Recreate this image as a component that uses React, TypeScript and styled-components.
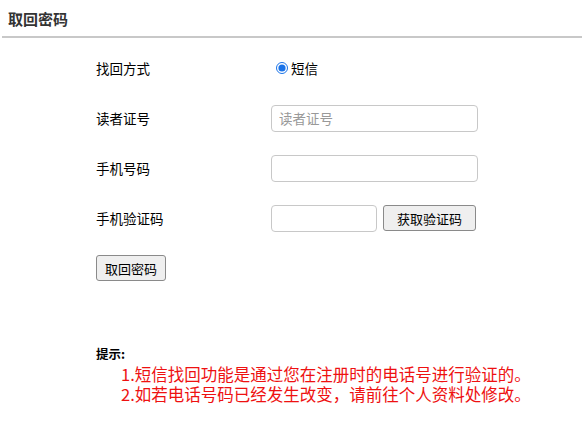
import React from "react";
import styled, { createGlobalStyle } from "styled-components";

const Global = createGlobalStyle`
  html, body { margin: 0; padding: 0; background: #fff; }
  body { font-family: "Noto Sans CJK SC", "Liberation Sans", sans-serif; color: #000; }
`;

const Page = styled.div`
  width: 582px;
  height: 424px;
  overflow: hidden;
`;

const Header = styled.div`
  margin: 0 0 0 2px;
  padding: 8px 0 6px 6px;
  border-bottom: 2px solid #c8c8c8;
`;

const Title = styled.h2`
  margin: 0;
  font-size: 15px;
  line-height: 22px;
  font-weight: 700;
  color: #333;
`;

const Form = styled.div`
  display: grid;
  grid-template-columns: 175px auto;
  grid-auto-rows: 50px;
  align-items: center;
  padding: 5px 0 0 96px;
`;

const Label = styled.span`
  font-size: 13.5px;
  line-height: 18px;
`;

const Field = styled.div`
  display: flex;
  align-items: center;
  gap: 6px;
`;

const RadioLabel = styled.label`
  display: flex;
  align-items: center;
  font-size: 13.5px;
  margin-left: 5px;
`;

const Radio = styled.input`
  width: 12px;
  height: 12px;
  margin: 0 3px 0 0;
  accent-color: #1a73e8;
`;

const Input = styled.input<{ $w: number }>`
  box-sizing: border-box;
  width: ${(p) => p.$w}px;
  height: 27px;
  border: 1px solid #c8c8c8;
  border-radius: 4px;
  padding: 0 7px;
  font-family: inherit;
  font-size: 13.5px;
  outline: none;
  &::placeholder { color: #999; }
`;

const Button = styled.button<{ $pad: number }>`
  box-sizing: border-box;
  height: 26px;
  padding: 0 ${(p) => p.$pad}px;
  border: 1px solid #8a8a8a;
  border-radius: 3px;
  background: #efefef;
  font-family: inherit;
  font-size: 13px;
  color: #000;
`;

const SubmitRow = styled.div`
  grid-column: 1 / span 2;
`;

const Tips = styled.div`
  padding: 52px 0 0 96px;
`;

const TipsTitle = styled.div`
  font-size: 12.5px;
  font-weight: 700;
  line-height: 18px;
  margin-bottom: 1px;
`;

const TipLine = styled.div`
  color: #ee1111;
  font-size: 16.5px;
  line-height: 20px;
  padding-left: 25px;
  white-space: nowrap;
`;

export default function App() {
  return (
    <Page>
      <Global />
      <Header>
        <Title>取回密码</Title>
      </Header>
      <Form>
        <Label>找回方式</Label>
        <Field>
          <RadioLabel>
            <Radio type="radio" name="way" defaultChecked />
            短信
          </RadioLabel>
        </Field>
        <Label>读者证号</Label>
        <Field>
          <Input $w={207} placeholder="读者证号" />
        </Field>
        <Label>手机号码</Label>
        <Field>
          <Input $w={207} />
        </Field>
        <Label>手机验证码</Label>
        <Field>
          <Input $w={106} />
          <Button $pad={13}>获取验证码</Button>
        </Field>
        <SubmitRow>
          <Button $pad={8}>取回密码</Button>
        </SubmitRow>
      </Form>
      <Tips>
        <TipsTitle>提示:</TipsTitle>
        <TipLine>1.短信找回功能是通过您在注册时的电话号进行验证的。</TipLine>
        <TipLine>2.如若电话号码已经发生改变，请前往个人资料处修改。</TipLine>
      </Tips>
    </Page>
  );
}
